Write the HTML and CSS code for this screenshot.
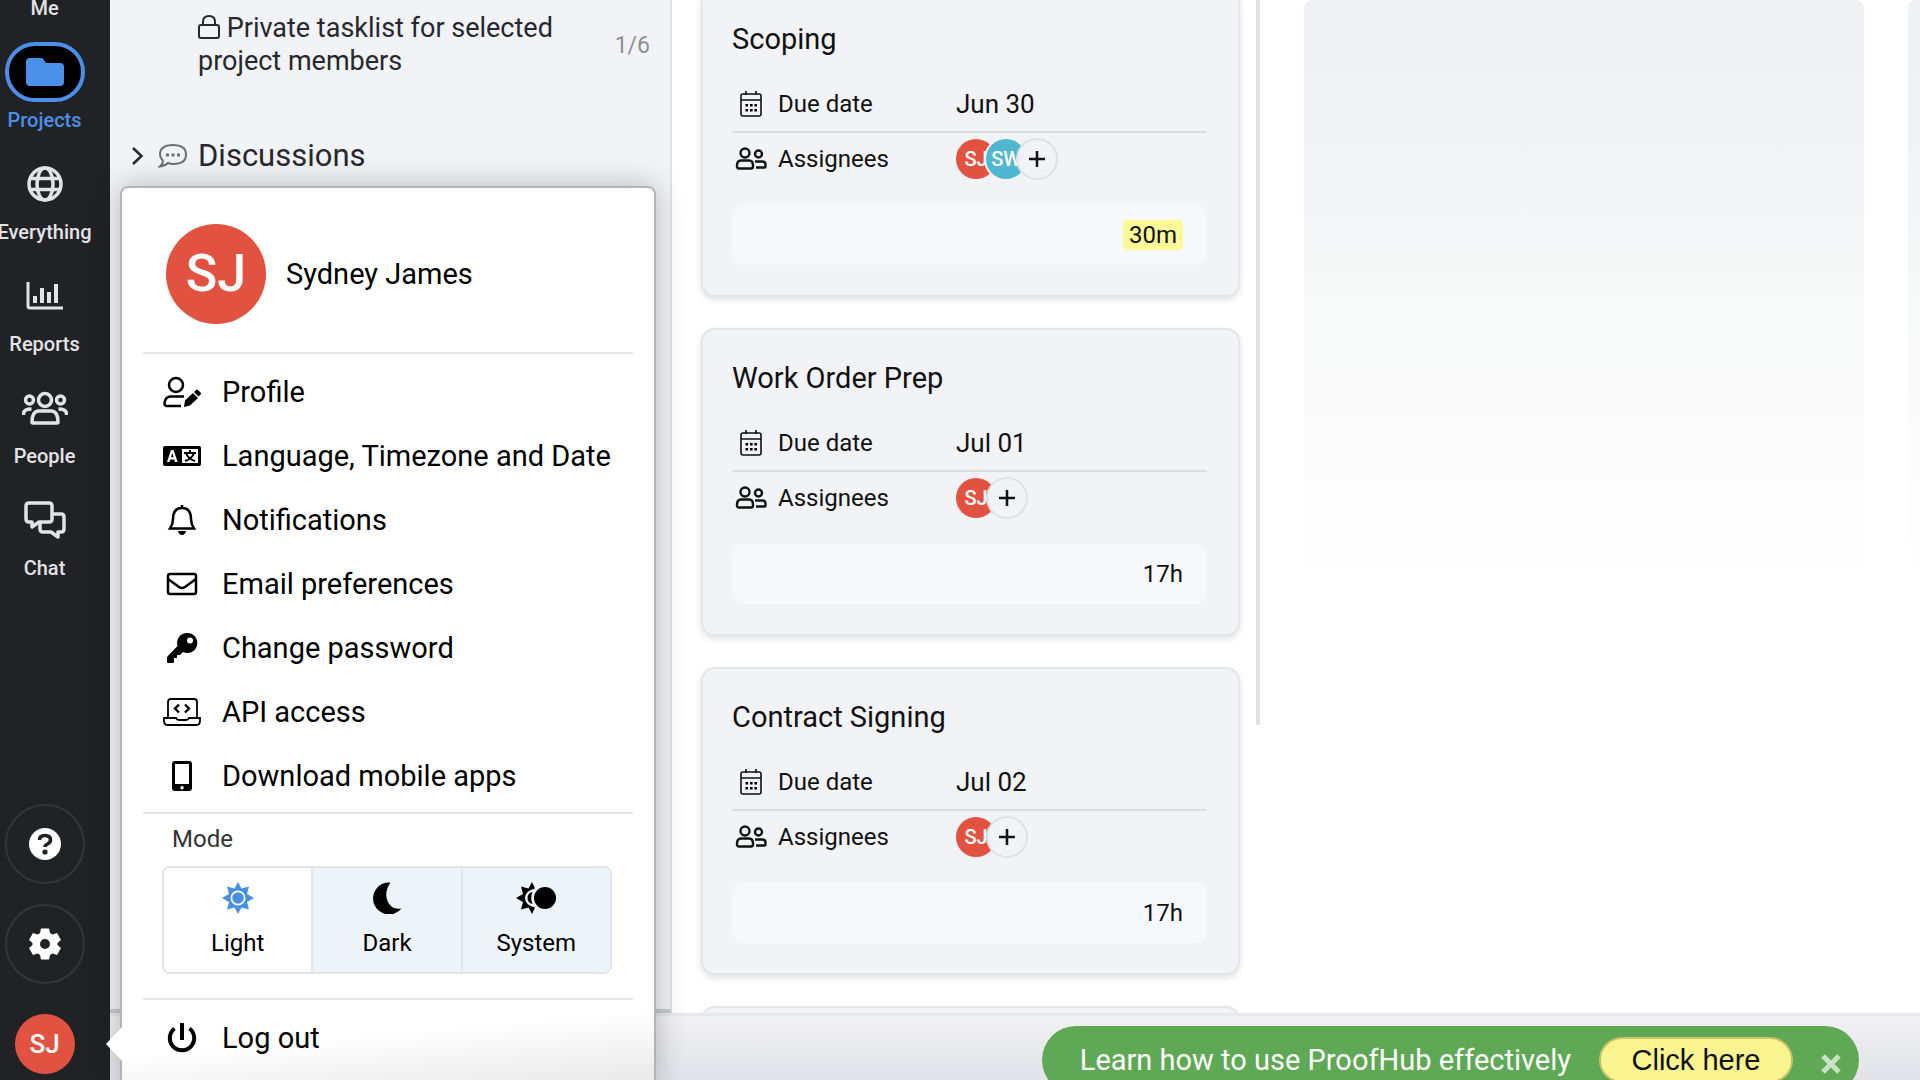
FILE: index.html
```html
<!DOCTYPE html>
<html lang="en">
<head>
    <meta charset="UTF-8">
    <meta name="viewport" content="width=device-width, initial-scale=1.0">
    <title>ProofHub</title>
    <link rel="stylesheet" href="styles.css">
</head>
<body>
    <!-- Shared icons -->
    <svg class="sprite" aria-hidden="true">
        <symbol id="calendar" viewBox="0 0 24 28">
            <g fill="none" stroke="currentColor" stroke-width="1.600">
                <rect x="2" y="4" width="20" height="22" rx="2"/>
                <path d="M2 10h20M7 1v4M17 1v4"/>
            </g>
            <path d="M6.500 14h2.600v2.600H6.500zM11 14h2.600v2.600H11zM15.400 14H18v2.600h-2.600zM6.500 19h2.600v2.600H6.500zM11 19h2.600v2.600H11zM15.400 19H18v2.600h-2.600z"/>
        </symbol>
        <symbol id="assignees" viewBox="0 0 32 24">
            <g fill="none" stroke="currentColor" stroke-width="2.4">
                <circle cx="10" cy="6" r="4.500"/>
                <circle cx="23.500" cy="7" r="3.500"/>
                <path d="M6 13.500h8q4 0 4 5v1q0 2-2 2H4q-2 0-2-2v-1q0-5 4-5zM20 14.500h7q3.500 0 3.500 3v2q0 1-1 1H21"/>
            </g>
        </symbol>
    </svg>

    <div class="app">
        <nav class="sidebar">
            <a href="#" class="nav-item"><span class="nav-icon"></span>Me</a>
            <a href="#" class="nav-item active">
                <span class="nav-icon">
                    <svg width="38" height="28" viewBox="0 0 38 28"><path fill="currentColor" d="M4 0h11q2 0 3 2l2 3h14q4 0 4 4v15q0 4-4 4H4q-4 0-4-4V4q0-4 4-4z"/></svg>
                </span>
                Projects
            </a>
            <a href="#" class="nav-item">
                <span class="nav-icon">
                    <svg width="36" height="36" viewBox="0 0 36 36" fill="none" stroke="currentColor" stroke-width="3.500"><circle cx="18" cy="18" r="16"/><ellipse cx="18" cy="18" rx="8" ry="16"/><path d="M3 12.500h30M3 23.500h30"/></svg>
                </span>
                Everything
            </a>
            <a href="#" class="nav-item">
                <span class="nav-icon">
                    <svg width="38" height="30" viewBox="0 0 38 30" fill="none" stroke="currentColor" stroke-width="4"><path stroke-width="3" d="M2 1v24q0 2 2 2h33"/><path d="M9 15v7M16 7v15M23 11v11M30 3v19"/></svg>
                </span>
                Reports
            </a>
            <a href="#" class="nav-item">
                <span class="nav-icon">
                    <svg width="46" height="34" viewBox="0 0 46 34" fill="none" stroke="currentColor" stroke-width="3.500"><circle cx="23" cy="9" r="6.500"/><circle cx="7.500" cy="9" r="4"/><circle cx="38.500" cy="9" r="4"/><path d="M16 20h14q6 1 6 11q0 1-1 1H11q-1 0-1-1q0-10 6-11zM1.500 24v-1q0-5 8-5M44.500 24v-1q0-5-8-5"/></svg>
                </span>
                People
            </a>
            <a href="#" class="nav-item">
                <span class="nav-icon">
                    <svg width="42" height="38" viewBox="0 0 42 38" fill="none" stroke="currentColor" stroke-width="3.500" stroke-linejoin="round"><path d="M5 2h20q3 0 3 3v13q0 3-3 3H15l-7 5v-5H5q-3 0-3-3V5q0-3 3-3z"/><path d="M28 13h9q3 0 3 3v12q0 3-3 3h-3v5l-7-5h-8q-3 0-3-3v-6"/></svg>
                </span>
                Chat
            </a>

            <div class="nav-bottom">
                <button class="round-btn" aria-label="Help">
                    <svg width="32" height="32" viewBox="0 0 32 32"><circle cx="16" cy="16" r="16" fill="#fff"/><path d="M10.500 12q0-4.500 5.500-4.500t5.500 4.500q0 2.500-3 4q-2.500 1.200-2.500 3" fill="none" stroke="#212226" stroke-width="3.600"/><circle cx="16" cy="24" r="2.600" fill="#212226"/></svg>
                </button>
                <button class="round-btn" aria-label="Settings">
                    <svg width="32" height="32" viewBox="0 0 32 32"><path fill="#fff" fill-rule="evenodd" d="M12 0.500h8l1 4.500 2.500 1.500 4.500-1.500 4 7-3.500 3v2l3.500 3-4 7-4.500-1.500-2.500 1.500-1 4.500h-8l-1-4.500-2.500-1.500L4 27l-4-7 3.500-3v-2L0 12l4-7 4.500 1.500L11 5zM16 11a5 5 0 1 0 0 10a5 5 0 1 0 0-10z"/></svg>
                </button>
                <button class="avatar avatar-nav">SJ</button>
            </div>
        </nav>

        <div class="workspace">
            <div class="content">
                <aside class="panel">
                    <div class="tasklist">
                        <p class="tasklist-name">
                            <svg width="22" height="26" viewBox="0 0 22 26" fill="none" stroke="currentColor" stroke-width="2"><rect x="1" y="11" width="20" height="13" rx="2"/><path d="M5 11V8q0-6 6-6t6 6v3"/></svg>
                            Private tasklist for selected project members
                        </p>
                        <span class="count">1/6</span>
                    </div>
                    <a href="#" class="discussions">
                        <svg width="12" height="20" viewBox="0 0 12 20" fill="none" stroke="currentColor" stroke-width="2.500"><path d="M1 2l8.500 8L1 18"/></svg>
                        <svg class="bubble" width="30" height="26" viewBox="0 0 30 26" fill="none" stroke="currentColor" stroke-width="2"><path d="M5 18Q2 15 2 11.500Q2 2 15 2t13 9.500T15 21q-3 0-5-1q-3 3-8 3.500q3-2.500 3-5.500z"/><path stroke-width="3" d="M8 12h3M13.500 12h3M19 12h3"/></svg>
                        Discussions
                    </a>
                </aside>

                <main class="board">
                    <section class="column" id="cards"></section>
                    <div class="column-line"></div>
                    <section class="column-empty"></section>
                    <section class="column-empty"></section>
                </main>
            </div>

            <footer class="footer">
                <div class="banner">
                    <span>Learn how to use ProofHub effectively</span>
                    <button class="banner-btn">Click here</button>
                    <button class="banner-close" aria-label="Close">
                        <svg width="20" height="20" viewBox="0 0 20 20" fill="none" stroke="currentColor" stroke-width="5"><path d="M2 2l16 16M18 2L2 18"/></svg>
                    </button>
                </div>
            </footer>
        </div>
    </div>

    <!-- User menu -->
    <div class="user-menu">
        <div class="user">
            <span class="avatar avatar-big">SJ</span>
            <span>Sydney James</span>
        </div>
        <ul class="menu-list">
            <li><a href="#">
                <svg width="38" height="32" viewBox="0 0 38 32" fill="none" stroke="currentColor" stroke-width="2.500"><circle cx="13" cy="9" r="7"/><path d="M21 20.500H8q-6 0-6.500 7q0 2.500 2.500 2.500h14"/><path fill="currentColor" stroke="none" d="M21 31l1-6.500 8-7.500 5 5-8 7.500zM31 16l2-2q1-1 2 0l2.500 2.500q1 1 0 2l-2 2z"/></svg>
                Profile
            </a></li>
            <li><a href="#">
                <svg width="38" height="20" viewBox="0 0 38 20"><path fill="currentColor" fill-rule="evenodd" d="M2 0h34q2 0 2 2v16q0 2-2 2H2q-2 0-2-2V2q0-2 2-2zM19 3v14h16V3zM8 4L4 16h2.500l.8-2.500h4L12 16h2.700L10.500 4zm1.300 3l1.300 4.200H8z"/><path d="M21 7h12M27 4v3M31 7q-2 6-9 8M23 7q2 6 9 8" fill="none" stroke="currentColor" stroke-width="2"/></svg>
                Language, Timezone and Date
            </a></li>
            <li><a href="#">
                <svg width="38" height="32" viewBox="0 0 38 32"><path d="M19 4q9 0 9 11 0 5 3 9.500H7q3-4.500 3-9.500Q10 4 19 4zM19 1v3" fill="none" stroke="currentColor" stroke-width="2.500"/><path fill="currentColor" d="M15 27h8q-1 4-4 4t-4-4z"/></svg>
                Notifications
            </a></li>
            <li><a href="#">
                <svg width="38" height="24" viewBox="0 0 38 24" fill="none" stroke="currentColor" stroke-width="2.500"><rect x="5" y="2" width="28" height="20" rx="2"/><path d="M5 7l11 8q3 2 6 0l11-8"/></svg>
                Email preferences
            </a></li>
            <li><a href="#">
                <svg width="38" height="32" viewBox="0 0 38 32"><path fill="currentColor" fill-rule="evenodd" d="M24 1a10 10 0 1 1-4 19l-3 3h-3v3h-3v4q0 1-1 1H5q-1 0-1-1v-5L14.500 14A10 10 0 0 1 24 1zM27 5.500a3 3 0 1 0 0 6a3 3 0 1 0 0-6z"/></svg>
                Change password
            </a></li>
            <li><a href="#">
                <svg width="38" height="30" viewBox="0 0 38 30" fill="none" stroke="currentColor" stroke-width="1.800"><path d="M5 21V5q0-3 3-3h23q3 0 3 3v16M1 21h12q1 2 3 2h7q2 0 3-2h11v3q0 4-4 4H5q-4 0-4-4z"/><path stroke-width="2.400" d="M16 7.500L12 11.500l4 4M22 7.500l4 4-4 4"/></svg>
                API access
            </a></li>
            <li><a href="#">
                <svg width="38" height="30" viewBox="0 0 38 30"><path fill="currentColor" fill-rule="evenodd" d="M12 0h14q3 0 3 3v24q0 3-3 3H12q-3 0-3-3V3q0-3 3-3zM12 3v20h14V3zM19 25a1.700 1.700 0 1 0 .1 0z"/></svg>
                Download mobile apps
            </a></li>
        </ul>
        <div class="mode">
            <h3>Mode</h3>
            <div class="mode-buttons">
                <button class="selected">
                    <svg width="32" height="32" viewBox="0 0 32 32"><path fill="#4a90e2" fill-rule="evenodd" d="M16 0l3.500 6.500 7.500-2-2 7.500 7 4-7 4 2 7.500-7.500-2L16 32l-3.500-6.500-7.500 2 2-7.500-7-4 7-4-2-7.500 7.500 2zM16 8.500a7.500 7.500 0 1 0 0 15a7.500 7.500 0 1 0 0-15z"/><circle cx="16" cy="16" r="5.800" fill="#4a90e2"/></svg>
                    Light
                </button>
                <button>
                    <svg width="32" height="32" viewBox="0 0 32 32"><path d="M19.500 0.500A16 16 0 1 0 30.500 26.500Q20 28 16.500 19T19.500 .5z"/></svg>
                    Dark
                </button>
                <button>
                    <svg width="40" height="32" viewBox="0 0 40 32"><path d="M16 0l3 6.500Q9 9 9 16t10 9.500L16 32l-3.500-6.500-7.500 2 2-7.500-7-4 7-4-2-7.500 7.500 2z"/><path d="M16.500 10q-2.500 6 0 12q-5-1-5-6t5-6z"/><circle cx="29" cy="16" r="11"/></svg>
                    System
                </button>
            </div>
        </div>
        <a href="#" class="logout">
            <svg width="38" height="30" viewBox="0 0 38 30" fill="none" stroke="currentColor" stroke-width="4"><path d="M11.500 5.500a12.200 12.200 0 1 0 15 0M19 0v17"/></svg>
            Log out
        </a>
    </div>

    <script>
        // Board cards
        var tasks = [
            { title: "Scoping", due: "Jun 30", people: ["SJ", "SW"], time: "30m", mark: true },
            { title: "Work Order Prep", due: "Jul 01", people: ["SJ"], time: "17h" },
            { title: "Contract Signing", due: "Jul 02", people: ["SJ"], time: "17h" }
        ];

        var html = "";
        tasks.forEach(function(task) {
            var people = task.people.map(function(name) {
                return '<span class="avatar avatar-small ' + name.toLowerCase() + '">' + name + '</span>';
            }).join("");

            html += '<article class="card">' +
                '<h2>' + task.title + '</h2>' +
                '<div class="field due"><svg width="24" height="28"><use href="#calendar"/></svg>' +
                '<span>Due date</span><span class="date">' + task.due + '</span></div>' +
                '<div class="field"><svg width="32" height="24"><use href="#assignees"/></svg>' +
                '<span>Assignees</span><div class="people">' + people +
                '<button class="add" aria-label="Add assignee"><svg width="16" height="16" viewBox="0 0 16 16"><path d="M8 0v16M0 8h16" stroke="#111" stroke-width="2.500"/></svg></button></div></div>' +
                '<div class="time"><span class="' + (task.mark ? 'mark' : '') + '">' + task.time + '</span></div>' +
                '</article>';
        });
        html += '<article class="card"></article>';
        document.getElementById("cards").innerHTML = html;
    </script>
</body>
</html>
```

FILE: styles.css
```css
* {
    box-sizing: border-box;
}
body {
    margin: 0;
    font-family: Roboto, "Liberation Sans", sans-serif;
    font-size: 24px;
    color: #111;
    background-color: #fff;
    overflow: hidden;
}
h2, h3, p, ul {
    margin: 0;
    padding: 0;
    font-weight: 400;
}
ul {
    list-style: none;
}
a {
    color: inherit;
    text-decoration: none;
}
button {
    font: inherit;
    color: inherit;
    padding: 0;
    border: none;
    background: none;
}
svg {
    flex-shrink: 0;
}
.sprite {
    position: absolute;
    width: 0;
    height: 0;
}
.app {
    display: flex;
    height: 100vh;
}

/* Sidebar */
.sidebar {
    width: 110px;
    flex-shrink: 0;
    display: flex;
    flex-direction: column;
    padding: 0 21px 6px 0;
    margin-top: -70px;
    background-color: #212226;
    color: #e2e3e6;
}
.nav-item {
    display: flex;
    flex-direction: column;
    align-items: center;
    gap: 6px;
    height: 112px;
    flex-shrink: 0;
    font-size: 20px;
    line-height: 24px;
    font-weight: 500;
}
.nav-icon {
    width: 80px;
    height: 60px;
    display: flex;
    align-items: center;
    justify-content: center;
    flex-shrink: 0;
}
.active {
    color: #4a90e8;
}
.active .nav-icon {
    background-color: #000;
    border: 4px solid #4a90e8;
    border-radius: 30px;
}
.nav-bottom {
    display: flex;
    flex-direction: column;
    align-items: center;
    gap: 20px;
    margin-top: auto;
}
.round-btn {
    width: 80px;
    height: 80px;
    display: flex;
    align-items: center;
    justify-content: center;
    border: 2px solid #35363a;
    border-radius: 50%;
}
.avatar {
    display: flex;
    align-items: center;
    justify-content: center;
    flex-shrink: 0;
    border-radius: 50%;
    background-color: #e25241;
    color: #fff;
    font-weight: 500;
}
.avatar-nav {
    width: 60px;
    height: 60px;
    margin-top: 10px;
    font-size: 26px;
}

/* Workspace */
.workspace {
    flex: 1;
    min-width: 0;
    display: flex;
    flex-direction: column;
}
.content {
    flex: 1;
    min-height: 0;
    display: flex;
}
.panel {
    width: 562px;
    flex-shrink: 0;
    padding: 12px 20px 0 18px;
    background-color: #f2f3f7;
    border-right: 2px solid #e2e3e7;
    border-bottom: 4px solid #c9cace;
    color: #26282d;
}
.tasklist {
    display: flex;
    justify-content: space-between;
    padding-left: 70px;
}
.tasklist-name {
    width: 380px;
    line-height: 33px;
    font-size: 27px;
}
.tasklist-name svg {
    vertical-align: -3px;
}
.count {
    padding-top: 19px;
    font-size: 23px;
    line-height: 30px;
    color: #8f9094;
}
.discussions {
    display: flex;
    align-items: center;
    gap: 10px;
    margin-top: 60px;
    padding-left: 4px;
    font-size: 31px;
    line-height: 36px;
}
.bubble {
    margin-left: 4px;
    color: #6f7075;
}

/* Board */
.board {
    flex: 1;
    min-width: 0;
    display: flex;
    overflow: hidden;
}
.column {
    width: 584px;
    flex-shrink: 0;
    display: flex;
    flex-direction: column;
    gap: 31px;
    margin-top: -11px;
    padding: 0 16px 0 29px;
}
.card {
    height: 308px;
    flex-shrink: 0;
    padding: 30px 31px 30px 29px;
    background-color: #f2f3f7;
    border: 2px solid #e4e5e8;
    border-radius: 14px;
    box-shadow: 0 3px 6px rgba(0, 0, 0, 0.12);
}
.card h2 {
    margin-bottom: 19px;
    font-size: 29px;
    line-height: 36px;
}
.field {
    display: grid;
    grid-template-columns: 38px 178px 1fr;
    align-items: center;
    justify-items: start;
    height: 52px;
    font-size: 24px;
}
.field > svg {
    justify-self: center;
}
.field span:not(.avatar) {
    padding-left: 8px;
}
.due {
    height: 57px;
    border-bottom: 2px solid #dcdde0;
}
.date {
    font-size: 26px;
}
.people {
    display: flex;
    align-items: center;
    padding-left: 8px;
}
.avatar-small {
    width: 40px;
    height: 40px;
    margin-right: -10px;
    font-size: 20px;
}
.sw {
    background-color: #50b7d0;
    box-shadow: 0 0 0 2px #f2f3f7;
}
.add {
    width: 42px;
    height: 42px;
    display: flex;
    align-items: center;
    justify-content: center;
    border: 2px solid #dfe0e4;
    border-radius: 50%;
    background-color: #f2f3f7;
}
.time {
    display: flex;
    align-items: center;
    justify-content: flex-end;
    height: 60px;
    margin-top: 20px;
    padding-right: 24px;
    border-radius: 12px;
    background-color: #f7f8fc;
}
.mark {
    padding: 0 6px;
    border-radius: 4px;
    line-height: 30px;
    background-color: #fbfa97;
}
.column-line {
    width: 4px;
    height: 725px;
    flex-shrink: 0;
    background-color: #e2e2e2;
}
.column-empty {
    width: 560px;
    flex-shrink: 0;
    height: 600px;
    margin-left: 44px;
    border-radius: 8px;
    background: linear-gradient(#eff0f4, #f3f4f8 32%, #f6f8f8 42%, #fafafa 66%, #fff);
}

/* Footer */
.footer {
    height: 67px;
    display: flex;
    justify-content: flex-end;
    padding: 10px 61px 0 0;
    border-top: 3px solid #e8e8ea;
    background: linear-gradient(#f1f1f4, #e2e3e8);
}
.banner {
    display: flex;
    align-items: center;
    gap: 28px;
    height: 68px;
    padding: 0 18px 0 38px;
    border-radius: 34px;
    background-color: #5fa856;
    color: #fff;
    font-size: 29px;
}
.banner-btn {
    width: 194px;
    height: 46px;
    border: 2px solid #c8c46a;
    border-radius: 23px;
    background-color: #faf591;
    color: #111;
    font-family: "Liberation Sans", Arial, sans-serif;
}
.banner-close {
    padding-top: 8px;
    color: #c9e2c6;
}

/* User menu */
.user-menu {
    position: absolute;
    left: 120px;
    top: 186px;
    width: 536px;
    height: 900px;
    padding: 0 21px;
    border: 2px solid #b3b3b8;
    border-radius: 8px;
    background: linear-gradient(175deg, #fff 92%, #e8e8e8);
    box-shadow: 0 0 30px rgba(0, 0, 0, 0.25);
    color: #000;
    font-size: 29px;
}
.user-menu::before {
    content: "";
    position: absolute;
    left: -16px;
    top: 838px;
    width: 17px;
    height: 36px;
    background-color: #fff;
    clip-path: polygon(0 50%, 100% 0, 100% 100%);
}
.user {
    display: flex;
    align-items: center;
    gap: 20px;
    height: 166px;
    padding: 7px 23px 0;
    border-bottom: 2px solid #e6e6e8;
}
.avatar-big {
    width: 100px;
    height: 100px;
    font-size: 52px;
}
.menu-list {
    padding: 6px 0 4px;
    border-bottom: 2px solid #e6e6e8;
}
.menu-list a, .logout {
    display: flex;
    align-items: center;
    gap: 21px;
    height: 64px;
    padding-left: 20px;
}
.mode {
    padding: 10px 21px 24px 19px;
    border-bottom: 2px solid #e6e6e8;
}
.mode h3 {
    padding-left: 10px;
    margin-bottom: 12px;
    font-size: 24px;
    line-height: 30px;
    color: #333;
}
.mode-buttons {
    display: flex;
    border: 2px solid #dfe6ea;
    border-radius: 8px;
    overflow: hidden;
}
.mode-buttons button {
    flex: 1;
    height: 104px;
    display: flex;
    flex-direction: column;
    align-items: center;
    gap: 14px;
    padding-top: 14px;
    font-size: 24px;
    line-height: 30px;
    background-color: #edf4f9;
}
.mode-buttons button + button {
    border-left: 2px solid #dfe6ea;
}
.mode-buttons .selected {
    background-color: #fff;
}
.logout {
    height: 76px;
}
```
